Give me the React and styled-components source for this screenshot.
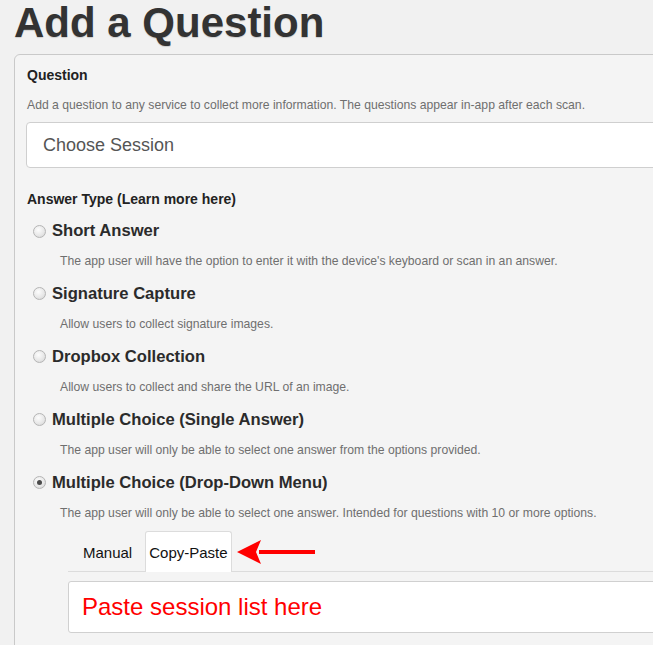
import styled, { createGlobalStyle } from "styled-components";

const GlobalStyle = createGlobalStyle`
  html, body {
    margin: 0;
    padding: 0;
    background: #f1f1f1;
    overflow: hidden;
  }
  body {
    font-family: "Liberation Sans", Arial, sans-serif;
    color: #333;
  }
`;

const Page = styled.div`
  padding-left: 14px;
`;

const Title = styled.h1`
  margin: -1px 0 0;
  font-size: 42px;
  line-height: 47px;
  font-weight: 700;
  color: #333;
  text-shadow: 0 1px 1px rgba(0, 0, 0, 0.15);
`;

const Panel = styled.div`
  margin-top: 8px;
  margin-right: -80px;
  border: 1px solid #c9c9c9;
  border-radius: 6px;
  background: #f4f4f4;
  padding: 10px 12px 20px 12px;
`;

const Label = styled.div`
  font-size: 14px;
  line-height: 20px;
  font-weight: 700;
  color: #222;
`;

const Help = styled.div`
  font-size: 12.2px;
  line-height: 18px;
  color: #6f6f6f;
  margin-top: ${(p) => p.$top || 0}px;
  padding-left: ${(p) => p.$indent || 0}px;
`;

const Select = styled.div`
  margin-top: 8px;
  margin-left: -1px;
  height: 44px;
  border: 1px solid #cfcfcf;
  border-radius: 4px;
  background: #fff;
  display: flex;
  align-items: center;
  padding-left: 16px;
  font-size: 18px;
  color: #555;
`;

const AnswerHead = styled(Label)`
  margin-top: 21px;
`;

const Options = styled.div`
  margin-top: 10px;
  display: flex;
  flex-direction: column;
  gap: 11.7px;
`;

const Option = styled.div`
  display: flex;
  flex-direction: column;
`;

const OptionRow = styled.label`
  display: flex;
  align-items: center;
  gap: 6px;
  padding-left: 6px;
  height: 24px;
  font-size: 16.6px;
  font-weight: 700;
  color: #2b2b2b;
`;

const Radio = styled.span`
  width: 11px;
  height: 11px;
  border-radius: 50%;
  border: 1px solid #b5b5b5;
  background: radial-gradient(circle at 40% 35%, #fdfdfd 0%, #e6e6e6 60%, #cfcfcf 100%);
  display: flex;
  align-items: center;
  justify-content: center;
  flex-shrink: 0;

  &::after {
    content: "";
    width: 5px;
    height: 5px;
    border-radius: 50%;
    background: ${(p) => (p.$checked ? "#4a4a4a" : "transparent")};
  }
`;

const TabArea = styled.div`
  margin-top: 9px;
  margin-left: 41px;
`;

const TabBar = styled.div`
  display: flex;
  align-items: flex-end;
  gap: 9px;
  padding-left: 11px;
  border-bottom: 1px solid #dcdcdc;
  height: 40px;
  position: relative;
`;

const Tab = styled.div`
  height: 41px;
  padding: 0 3px;
  display: flex;
  align-items: center;
  font-size: 15px;
  color: #111;
  box-sizing: border-box;
  border: 1px solid ${(p) => (p.$active ? "#dcdcdc" : "transparent")};
  border-bottom: none;
  border-radius: 3px 3px 0 0;
  background: ${(p) => (p.$active ? "#fff" : "transparent")};
  margin-bottom: -1px;
`;

const Arrow = styled.svg`
  position: absolute;
  left: 169px;
  top: 8px;
`;

const PasteBox = styled.div`
  margin-top: 9px;
  height: 50px;
  border: 1px solid #d0d0d0;
  border-radius: 3px;
  background: #fff;
  display: flex;
  align-items: center;
  padding-left: 13px;
  font-size: 24px;
  color: #f00;
`;

const options = [
  {
    name: "Short Answer",
    help: "The app user will have the option to enter it with the device's keyboard or scan in an answer.",
  },
  { name: "Signature Capture", help: "Allow users to collect signature images." },
  { name: "Dropbox Collection", help: "Allow users to collect and share the URL of an image." },
  {
    name: "Multiple Choice (Single Answer)",
    help: "The app user will only be able to select one answer from the options provided.",
  },
  {
    name: "Multiple Choice (Drop-Down Menu)",
    help: "The app user will only be able to select one answer. Intended for questions with 10 or more options.",
    checked: true,
  },
];

const App = () => {
  return (
    <>
      <GlobalStyle />
      <Page>
        <Title>Add a Question</Title>
        <Panel>
          <Label>Question</Label>
          <Help $top={11}>
            Add a question to any service to collect more information. The questions appear in-app after each scan.
          </Help>
          <Select>Choose Session</Select>
          <AnswerHead>Answer Type (Learn more here)</AnswerHead>
          <Options>
            {options.map((o) => (
              <Option key={o.name}>
                <OptionRow>
                  <Radio $checked={o.checked} />
                  {o.name}
                </OptionRow>
                <Help $top={9.3} $indent={33}>
                  {o.help}
                </Help>
              </Option>
            ))}
          </Options>
          <TabArea>
            <TabBar>
              <Tab>Manual</Tab>
              <Tab $active>Copy-Paste</Tab>
              <Arrow width="80" height="26" viewBox="0 0 80 26">
                <path d="M78 11 H22 V15 H78 Z M0 13 L24 1 L19 13 L24 25 Z" fill="#f00" />
              </Arrow>
            </TabBar>
            <PasteBox>Paste session list here</PasteBox>
          </TabArea>
        </Panel>
      </Page>
    </>
  );
};

export default App;
